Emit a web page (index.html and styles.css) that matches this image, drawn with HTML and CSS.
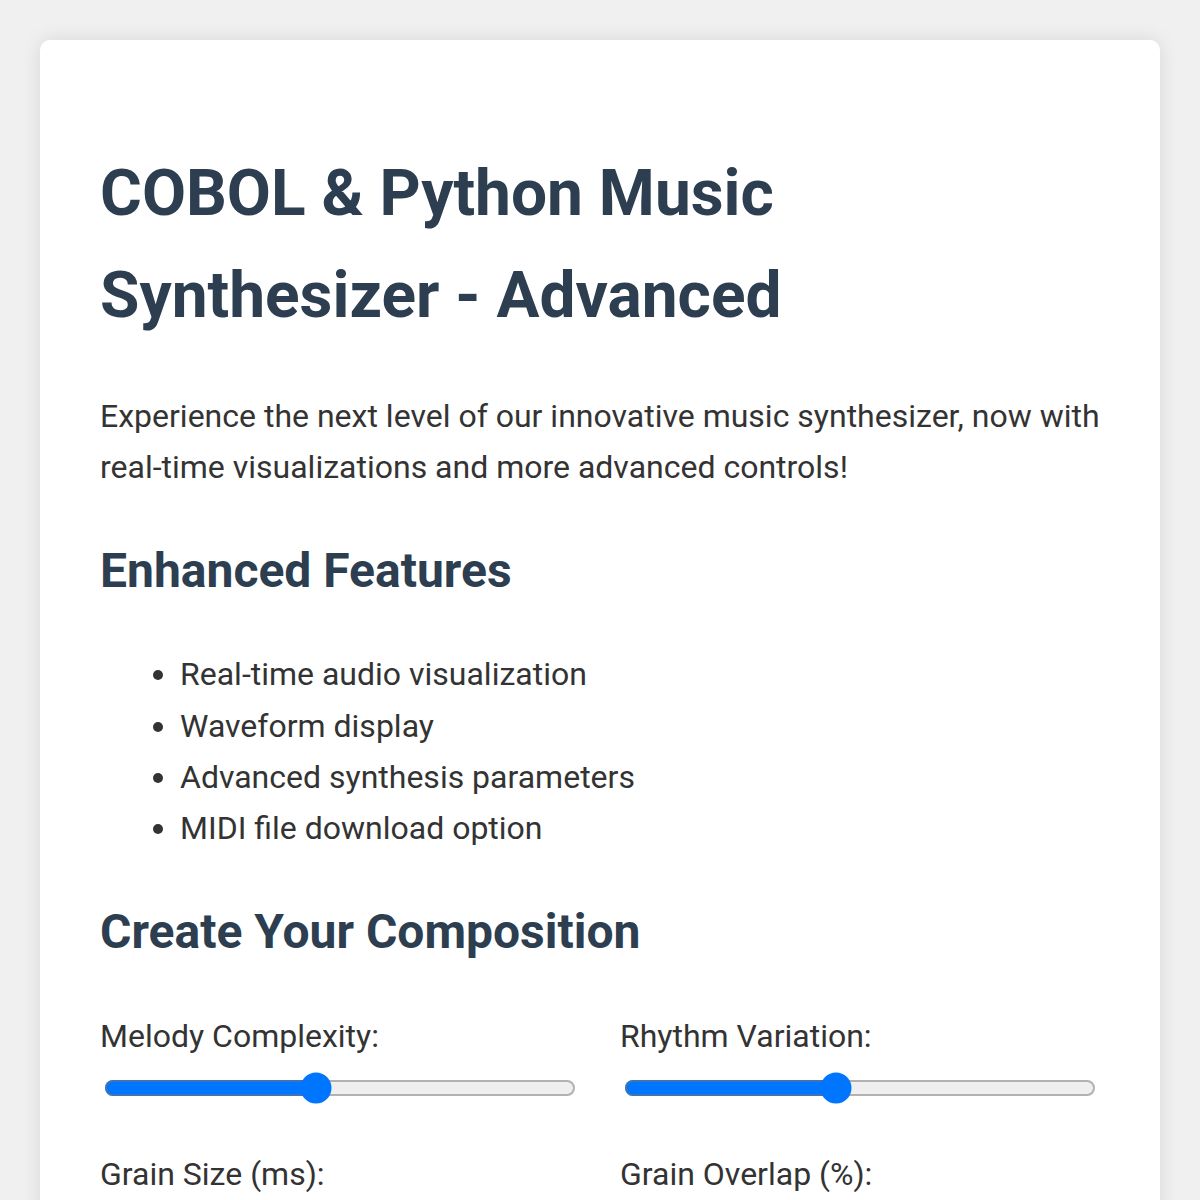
FILE: index.html
```html
<!DOCTYPE html>
<html lang="en">
<head>
<meta charset="utf-8">
<title>COBOL &amp; Python Music Synthesizer - Advanced</title>
<link rel="stylesheet" href="styles.css">
</head>
<body>
<div class="container">
  <h1>COBOL &amp; Python Music Synthesizer - Advanced</h1>
  <p>Experience the next level of our innovative music synthesizer, now with real-time visualizations and more advanced controls!</p>
  <h2>Enhanced Features</h2>
  <ul>
    <li>Real-time audio visualization</li>
    <li>Waveform display</li>
    <li>Advanced synthesis parameters</li>
    <li>MIDI file download option</li>
  </ul>
  <h2>Create Your Composition</h2>
  <div class="controls">
    <div class="control">
      <label for="melody">Melody Complexity:</label>
      <input type="range" id="melody" min="1" max="10" value="5">
    </div>
    <div class="control">
      <label for="rhythm">Rhythm Variation:</label>
      <input type="range" id="rhythm" min="1" max="10" value="5">
    </div>
    <div class="control">
      <label for="grainSize">Grain Size (ms):</label>
      <input type="range" id="grainSize" min="10" max="100" value="50">
    </div>
    <div class="control">
      <label for="grainOverlap">Grain Overlap (%):</label>
      <input type="range" id="grainOverlap" min="0" max="100" value="50">
    </div>
  </div>
</div>
</body>
</html>
```

FILE: styles.css
```css
html {
  zoom: 2;
}
body {
  margin: 0;
  padding: 20px;
  background: #f0f0f0;
  font-family: Roboto, "Liberation Sans", Arial, sans-serif;
  line-height: 1.6;
  color: #333;
}
.container {
  background: #fff;
  padding: 30px;
  border-radius: 5px;
  box-shadow: 0 0 10px rgba(0, 0, 0, 0.1);
}
h1, h2 {
  color: #2c3e50;
}
.controls {
  display: grid;
  grid-template-columns: 1fr 1fr;
  column-gap: 20px;
  row-gap: 15px;
}
.control label {
  display: block;
  margin-bottom: 3px;
}
.control input {
  width: calc(100% - 4px);
}
```
